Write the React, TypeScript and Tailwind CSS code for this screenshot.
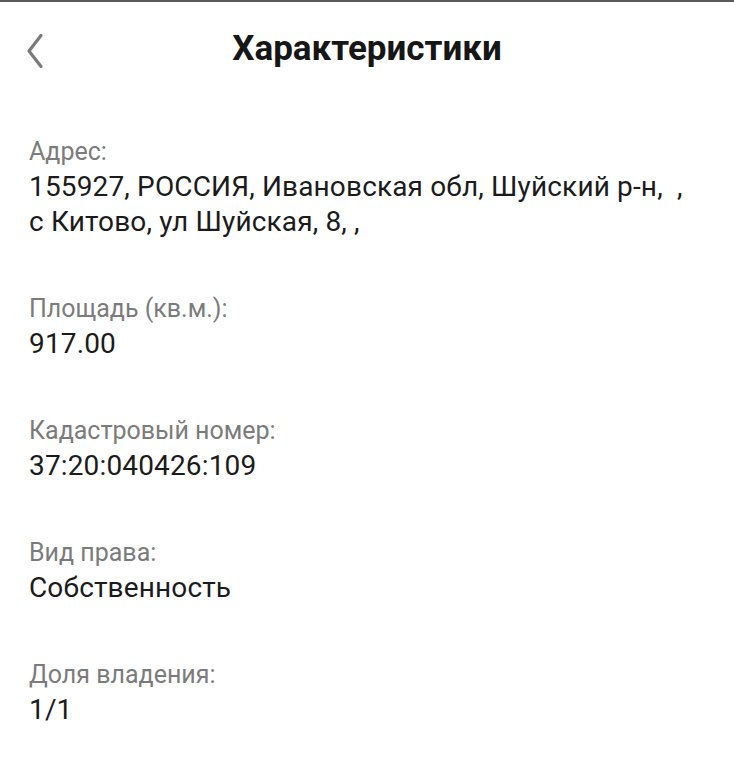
import React from "react";

const items: { label: string; value: string[] }[] = [
  { label: "Адрес:", value: ["155927, РОССИЯ, Ивановская обл, Шуйский р-н,  ,", "с Китово, ул Шуйская, 8, ,"] },
  { label: "Площадь (кв.м.):", value: ["917.00"] },
  { label: "Кадастровый номер:", value: ["37:20:040426:109"] },
  { label: "Вид права:", value: ["Собственность"] },
  { label: "Доля владения:", value: ["1/1"] },
];

export default function App() {
  return (
    <div className="min-h-[768px] w-full bg-white" style={{ fontFamily: "Roboto, 'Noto Sans', sans-serif" }}>
      <div className="h-[2px] w-full bg-[#5a5a5a]" />
      <div className="grid grid-cols-[1fr_auto_1fr] items-center pt-[25px]">
        <div className="flex items-center pl-[26px] pt-[3px]">
          <svg width="20" height="36" viewBox="0 0 20 36" fill="none">
            <path d="M15 2.5 L3 18 L15 33.5" stroke="#7a7a7a" strokeWidth="3.2" strokeLinecap="round" strokeLinejoin="round" />
          </svg>
        </div>
        <h1 className="text-[35px] leading-[44px] font-bold text-[#161616]">Характеристики</h1>
        <div />
      </div>
      <div className="flex flex-col gap-[53px] px-[29px] pt-[64px]">
        {items.map((it) => (
          <div key={it.label} className="flex flex-col">
            <div className="text-[25px] leading-[34px] text-[#7b7b7b]">{it.label}</div>
            {it.value.map((v, i) => (
              <div key={i} className="text-[28px] leading-[35px] text-[#1b1b1b] whitespace-pre tracking-[0.15px]">{v}</div>
            ))}
          </div>
        ))}
      </div>
    </div>
  );
}
